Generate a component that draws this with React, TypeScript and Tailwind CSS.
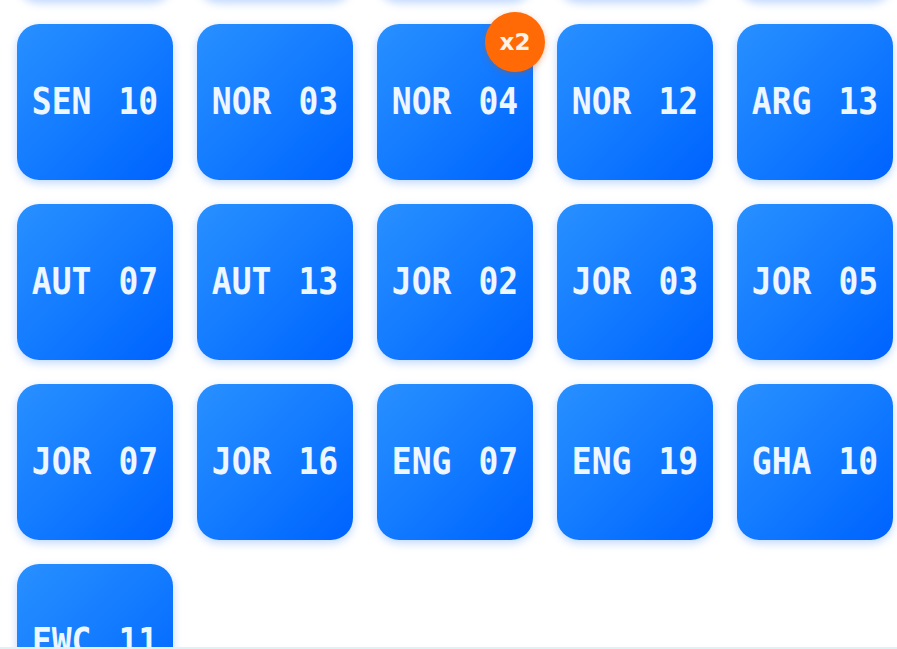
import React from "react";

type Sticker = { code: string; count?: number };

// The first row sits mostly above the fold; only its lower edge shows.
const rows: Sticker[][] = [
  [{ code: "" }, { code: "" }, { code: "" }, { code: "" }, { code: "" }],
  [{ code: "SEN 10" }, { code: "NOR 03" }, { code: "NOR 04", count: 2 }, { code: "NOR 12" }, { code: "ARG 13" }],
  [{ code: "AUT 07" }, { code: "AUT 13" }, { code: "JOR 02" }, { code: "JOR 03" }, { code: "JOR 05" }],
  [{ code: "JOR 07" }, { code: "JOR 16" }, { code: "ENG 07" }, { code: "ENG 19" }, { code: "GHA 10" }],
  [{ code: "FWC 11" }],
];

function Tile({ code, count }: Sticker) {
  const [team, num] = code.split(" ");
  return (
    <div className="relative h-[156px] w-[156px]">
      <div className="flex h-full w-full items-center justify-center rounded-[22px] bg-gradient-to-br from-[#2890ff] via-[#137bff] to-[#0062ff] pb-[3px] shadow-[0_3px_8px_rgba(20,110,255,0.28)]">
        {code ? (
          <span className="inline-flex scale-y-[1.15] gap-[27px] font-['DejaVu_Sans_Mono',monospace] text-[33px] font-bold leading-none text-[#eef6ff]">
            <span>{team}</span>
            <span>{num}</span>
          </span>
        ) : null}
      </div>
      {count ? (
        <div className="absolute -right-[12px] -top-[12px] flex h-[60px] w-[60px] items-center justify-center rounded-full bg-[#ff6a06] shadow-[0_2px_6px_rgba(200,80,0,0.35)]">
          <span className="font-['DejaVu_Sans',sans-serif] text-[23px] font-bold leading-none text-[#fff3e8]">
            x{count}
          </span>
        </div>
      ) : null}
    </div>
  );
}

export default function App() {
  return (
    <div className="flex h-[649px] w-[897px] flex-col overflow-hidden bg-white">
      <div className="flex-1 overflow-hidden">
        <div className="-mt-[156px] grid grid-cols-[repeat(5,156px)] gap-6 pl-[17px]">
          {rows.flat().map((s, i) => (
            <Tile key={i} {...s} />
          ))}
        </div>
      </div>
      <div className="h-[2px] bg-[#dff3f6]" />
    </div>
  );
}
